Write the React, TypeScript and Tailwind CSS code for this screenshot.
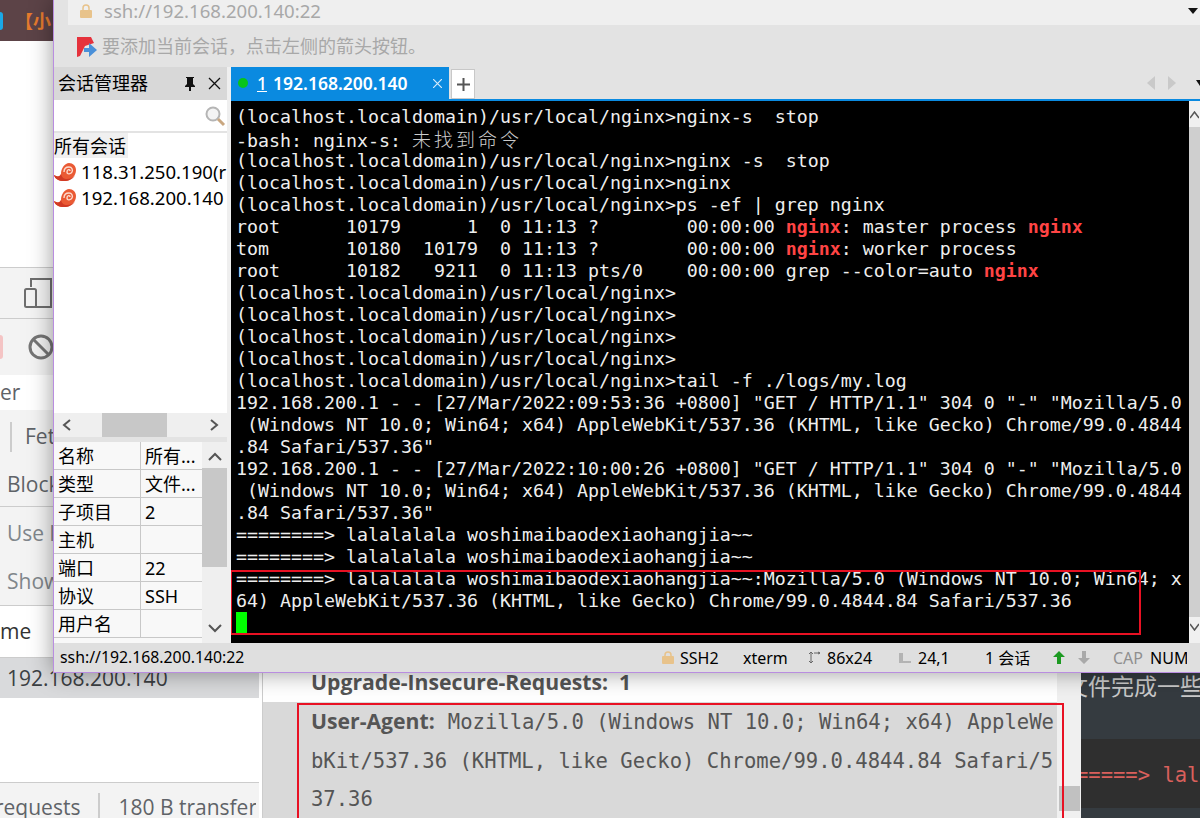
const PROMPT = "(localhost.localdomain)/usr/local/nginx>"

function Nginx() {
    return <span className="font-bold text-[#ff4444]">nginx</span>
}

function Snail() {
    return (
        <svg width="22" height="19" viewBox="0 0 22 19" className="shrink-0">
            <path d="M0 12c3 2 6 2 7-1C7 5 11 0 15 0c4 0 7 3 7 7 0 6-5 11-12 11-5 0-9-2-10-6Z" fill="#ea5a34" />
            <path d="M0 12c3 2 6 2 7-1 1 4 3 5 6 5 3 0 6-1 8-4-2 4-6 6-11 6-5 0-9-2-10-6Z" fill="#d13a24" />
            <path d="M10 9c0-3 2-5 5-5s4 3 3 5-5 3-5 0 3-3 3-1" stroke="#fcdccf" strokeWidth="1.400" fill="none" />
        </svg>
    )
}

function Terminal() {
    const lines: React.ReactNode[] = [
        PROMPT + "nginx-s  stop",
        <>-bash: nginx-s: <span className="font-['Noto_Sans_CJK_SC',monospace] font-light text-[19px] tracking-[3px] text-[#cccccc]">未找到命令</span></>,
        PROMPT + "nginx -s  stop",
        PROMPT + "nginx",
        PROMPT + "ps -ef | grep nginx",
        <>root      10179      1  0 11:13 ?        00:00:00 <Nginx />: master process <Nginx /></>,
        <>tom       10180  10179  0 11:13 ?        00:00:00 <Nginx />: worker process</>,
        <>root      10182   9211  0 11:13 pts/0    00:00:00 grep --color=auto <Nginx /></>,
        PROMPT,
        PROMPT,
        PROMPT,
        PROMPT,
        PROMPT + "tail -f ./logs/my.log",
        '192.168.200.1 - - [27/Mar/2022:09:53:36 +0800] "GET / HTTP/1.1" 304 0 "-" "Mozilla/5.0',
        " (Windows NT 10.0; Win64; x64) AppleWebKit/537.36 (KHTML, like Gecko) Chrome/99.0.4844",
        '.84 Safari/537.36"',
        '192.168.200.1 - - [27/Mar/2022:10:00:26 +0800] "GET / HTTP/1.1" 304 0 "-" "Mozilla/5.0',
        " (Windows NT 10.0; Win64; x64) AppleWebKit/537.36 (KHTML, like Gecko) Chrome/99.0.4844",
        '.84 Safari/537.36"',
        "========> lalalalala woshimaibaodexiaohangjia~~",
        "========> lalalalala woshimaibaodexiaohangjia~~",
        "========> lalalalala woshimaibaodexiaohangjia~~:Mozilla/5.0 (Windows NT 10.0; Win64; x",
        "64) AppleWebKit/537.36 (KHTML, like Gecko) Chrome/99.0.4844.84 Safari/537.36",
    ]
    return (
        <div className="relative w-[958px] bg-black pl-[5px] pt-[5px] font-['DejaVu_Sans_Mono',monospace] text-[18.27px] leading-[22px] text-[#eeeeee] whitespace-pre overflow-hidden">
            {lines.map((line, i) => <div key={i} className="h-[22px]">{line}</div>)}
            <div className="h-[22px] w-[11px] bg-[#00ff00]"></div>
            {/* red annotation drawn over the terminal */}
            <div className="absolute left-[-1px] top-[469px] w-[911px] h-[65px] border-2 border-[#e81123]"></div>
        </div>
    )
}

function Sidebar() {
    const props = [["名称", "所有..."], ["类型", "文件..."], ["子项目", "2"], ["主机", ""], ["端口", "22"], ["协议", "SSH"], ["用户名", ""]]
    return (
        <div className="w-[173px] flex flex-col text-black font-['Noto_Sans','Noto_Sans_CJK_SC',sans-serif]">
            <div className="h-[33px] bg-[#d8d8d8] flex items-center pl-[4px] pr-[6px] text-[18px]">
                <span className="flex-1">会话管理器</span>
                <svg width="14" height="16" viewBox="0 0 14 16" className="mr-[11px]"><path d="M3 1h8v1h-1v6l2 2v1H8v4H6v-4H2v-1l2-2V2H3Z" fill="#111" /></svg>
                <svg width="13" height="13" viewBox="0 0 13 13"><path d="M1 1l11 11M12 1 1 12" stroke="#111" strokeWidth="1.300" /></svg>
            </div>
            <div className="h-[31px] bg-white flex items-center justify-end pr-[1px] mb-[2px]">
                <svg width="22" height="22" viewBox="0 0 22 22">
                    <circle cx="9" cy="9" r="6.500" fill="#f4f4f4" stroke="#b5b5b5" strokeWidth="2" />
                    <path d="M14 14l6 6" stroke="#c9a780" strokeWidth="3" />
                </svg>
            </div>
            <div className="h-[280px] bg-white text-[18.600px] leading-[26px] overflow-hidden">
                <div className="w-[74px] h-[25px] bg-[#f0f0f0] text-[18px] whitespace-nowrap">所有会话</div>
                <div className="flex items-center h-[26px] mt-[1px] whitespace-nowrap overflow-hidden gap-[5px]"><Snail />118.31.250.190(r</div>
                <div className="flex items-center h-[26px] whitespace-nowrap overflow-hidden gap-[5px]"><Snail />192.168.200.140</div>
            </div>
            <div className="h-[24px] bg-[#efefef] flex items-center px-[8px] mb-[5px]">
                <svg width="10" height="12" viewBox="0 0 10 12"><path d="M8 1 2 6l6 5" stroke="#555" strokeWidth="2" fill="none" /></svg>
                <div className="ml-[30px] w-[65px] h-full bg-[#c8c8c8] mr-auto"></div>
                <svg width="10" height="12" viewBox="0 0 10 12"><path d="M2 1l6 5-6 5" stroke="#555" strokeWidth="2" fill="none" /></svg>
            </div>
            <div className="flex-1 flex bg-[#f8f8f8] overflow-hidden">
                <div className="w-[148px] text-[18px] leading-[29px]">
                    {props.map(([name, value]) => (
                        <div key={name} className="h-[28px] flex border-b border-[#c8c8c8]">
                            <div className="w-[87px] pl-[4px] border-r border-[#c8c8c8]">{name}</div>
                            <div className="pl-[4px]">{value}</div>
                        </div>
                    ))}
                </div>
                <div className="w-[25px] bg-[#efefef] flex flex-col items-center">
                    <svg width="14" height="10" viewBox="0 0 14 10" className="mt-[10px] mb-[6px]"><path d="M1 8l6-6 6 6" stroke="#555" strokeWidth="2" fill="none" /></svg>
                    <div className="w-full h-[99px] bg-[#c8c8c8] mb-[56px]"></div>
                    <svg width="14" height="10" viewBox="0 0 14 10"><path d="M1 2l6 6 6-6" stroke="#555" strokeWidth="2" fill="none" /></svg>
                </div>
            </div>
        </div>
    )
}

function StatusBar() {
    return (
        <div className="h-[29px] bg-[#dfdfdf] flex items-center pl-[6px] text-[16px] text-black font-['Noto_Sans','Noto_Sans_CJK_SC',sans-serif] whitespace-nowrap overflow-hidden">
            <span className="w-[602px] text-[15.800px]">ssh://192.168.200.140:22</span>
            <svg width="12" height="13" viewBox="0 0 12 13" className="mr-[6px]"><path d="M3 6V4a3 3 0 0 1 6 0v2" stroke="#e8c38b" strokeWidth="1.500" fill="none" /><rect y="5" width="12" height="8" rx="1" fill="#e8c38b" /></svg>
            <span className="w-[63px]">SSH2</span>
            <span className="w-[65px]">xterm</span>
            <svg width="12" height="13" viewBox="0 0 12 13" className="mr-[7px]"><path d="M3 1v11M1 3l2-2 2 2M1 10l2 2 2-2M6 2h6M10 1l2 1-2 1" stroke="#666" fill="none" /></svg>
            <span className="w-[72px]">86x24</span>
            <svg width="12" height="10" viewBox="0 0 12 10" className="mr-[7px]"><path d="M1 0v10M3 0v10M5 8v2M7 8v2M9 8v2M11 8v2" stroke="#888" /></svg>
            <span className="w-[67px]">24,1</span>
            <span className="w-[68px]">1 会话</span>
            <svg width="12" height="13" viewBox="0 0 12 13" className="mr-[13px]"><path d="M6 0l6 6H8v7H4V6H0Z" fill="#1d9a22" /></svg>
            <svg width="12" height="13" viewBox="0 0 12 13" className="mr-[23px]"><path d="M6 13 0 7h4V0h4v7h4Z" fill="#a9a9a9" /></svg>
            <span className="text-[#8f8f8f] mr-[7px]">CAP</span>
            <span className="w-[37px] overflow-hidden">NUM</span>
        </div>
    )
}

function SshWindow() {
    return (
        <div className="absolute left-[53px] top-0 w-[1147px] h-[673px] border-l border-b border-[#b98de0] bg-[#e3e3e3] flex flex-col shadow-[0_0_22px_rgba(0,0,0,0.4)] font-['Noto_Sans','Noto_Sans_CJK_SC',sans-serif]">
            <div className="h-[25px] flex pl-[14px]">
                <div className="flex-1 bg-[#efefef] flex items-center pl-[12px] pb-[3px] text-[18.600px] text-[#a8a8a8] whitespace-nowrap">
                    <svg width="12" height="14" viewBox="0 0 12 14" className="mr-[12px]"><path d="M3 7V4a3 3 0 0 1 6 0v3" stroke="#e8c38b" strokeWidth="1.500" fill="none" /><rect y="6" width="12" height="8" rx="1" fill="#e8c38b" /></svg>
                    <span className="flex-1">ssh://192.168.200.140:22</span>
                    <svg width="10" height="6" viewBox="0 0 10 6" className="mr-[2px]"><path d="M0 0h10L5 6Z" fill="#111" /></svg>
                </div>
            </div>
            <div className="h-[42px] flex items-center pl-[22px] pt-[1px] text-[18px] text-[#a8a8a8] whitespace-nowrap">
                <svg width="21" height="20" viewBox="0 0 21 20" className="mr-[5px] shrink-0">
                    <path d="M1 0h14l3 6-9 3-5 10-3 1Z" fill="#e5323c" />
                    <path d="M8 11h5V6l8 7-8 7v-5H8Z" fill="#4a90d9" />
                </svg>
                要添加当前会话，点击左侧的箭头按钮。
            </div>
            <div className="flex-1 flex min-h-0">
                <Sidebar />
                <div className="w-[4px] bg-[#efefef]"></div>
                <div className="flex-1 flex flex-col min-w-0">
                    <div className="h-[34px] flex border-b-2 border-[#0a8ae0] bg-[#e3e3e3]">
                        <div className="w-[218px] bg-[#0a8ae0] flex items-center pl-[7px] text-white text-[17.500px] font-semibold whitespace-nowrap">
                            <span className="w-[10px] h-[10px] rounded-full bg-[#08c41a] mr-[9px]"></span>
                            <span className="underline mr-[6px] font-medium">1</span>
                            <span className="w-[160px]">192.168.200.140</span>
                            <svg width="9" height="9" viewBox="0 0 9 9"><path d="M0 0l9 9M9 0 0 9" stroke="#d5ebfb" strokeWidth="1.200" /></svg>
                        </div>
                        <div className="ml-[2px] mt-[2px] w-[24px] h-[30px] bg-white border border-[#c8c8c8] flex items-center justify-center">
                            <svg width="13" height="13" viewBox="0 0 13 13"><path d="M6.500 0v13M0 6.500h13" stroke="#555" strokeWidth="2" /></svg>
                        </div>
                        <div className="flex-1 flex items-center justify-end">
                            <svg width="8" height="14" viewBox="0 0 8 14" className="mr-[13px]"><path d="M8 0v14L0 7Z" fill="#c9c9c9" /></svg>
                            <svg width="8" height="14" viewBox="0 0 8 14" className="mr-[20px]"><path d="M0 0v14l8-7Z" fill="#c9c9c9" /></svg>
                            <svg width="4" height="6" viewBox="0 0 4 6"><path d="M0 0h4v6Z" fill="#111" /></svg>
                        </div>
                    </div>
                    <div className="flex-1 flex min-h-0">
                        <Terminal />
                        <div className="flex-1 bg-[#f0f0f0] flex flex-col items-center">
                            <svg width="9" height="8" viewBox="0 0 9 8" className="mt-[10px] mb-[8px]"><path d="M0 7l4.500-6L9 7" stroke="#555" strokeWidth="1.500" fill="none" /></svg>
                            <div className="w-full h-[490px] bg-[#cfcfcf] mb-[6px]"></div>
                            <svg width="9" height="8" viewBox="0 0 9 8"><path d="M0 1l4.500 6L9 1" stroke="#555" strokeWidth="1.500" fill="none" /></svg>
                        </div>
                    </div>
                </div>
            </div>
            <StatusBar />
        </div>
    )
}

function LeftPanel() {
    return (
        <div className="w-[259px] h-[818px] flex flex-col text-[21px] text-[#5f6368] font-['Open_Sans',sans-serif] whitespace-nowrap overflow-hidden">
            <div className="shrink-0 h-[41px] bg-[#5c4347] flex items-center text-[18px] text-[#e67b2e] font-['Noto_Sans_CJK_SC',sans-serif] font-bold">
                <span className="w-[3px] h-[18px] bg-[#1aa9e8] rounded-r mr-[12px]"></span>
                【小
            </div>
            <div className="shrink-0 h-[226px] bg-white"></div>
            <div className="shrink-0 h-[52px] bg-[#f3f3f3] border-y border-[#cccccc] flex items-center pl-[24px]">
                <svg width="28" height="30" viewBox="0 0 28 30" fill="none" stroke="#6e6e6e" strokeWidth="2">
                    <path d="M7 9V1h20v28H11" />
                    <rect x="1" y="11" width="11" height="18" rx="1.500" />
                </svg>
            </div>
            <div className="shrink-0 h-[56px] bg-[#f3f3f3] flex items-center">
                <span className="w-[3px] h-[24px] rounded-r-full bg-[#f4c4c4] mr-[25px]"></span>
                <svg width="26" height="26" viewBox="0 0 26 26" fill="none" stroke="#757575" strokeWidth="3">
                    <circle cx="13" cy="13" r="11" /><path d="M5 5l16 16" />
                </svg>
            </div>
            <div className="shrink-0 h-[35px] bg-white flex items-center">
                <span>er</span>
            </div>
            <div className="shrink-0 h-[97px] bg-[#f3f3f3] border-b border-[#cccccc] flex flex-col">
                <div className="h-[53px] flex items-center">
                    <span className="w-[2px] h-[30px] bg-[#cccccc] ml-[10px] mr-[13px]"></span>
                    <span>Fet</span>
                </div>
                <div className="pl-[7px] pt-[8px] leading-[26px]">Block</div>
            </div>
            <div className="shrink-0 h-[99px] bg-[#f3f3f3] border-b border-[#cccccc] pl-[7px] text-[#80868b]">
                <div className="pt-[12px] leading-[28px]">Use l</div>
                <div className="pt-[20px] leading-[28px]">Show</div>
            </div>
            <div className="shrink-0 h-[52px] bg-white border-b border-[#cccccc] flex items-center">
                <span className="text-[#333]">me</span>
            </div>
            <div className="shrink-0 h-[40px] bg-[#d9dadc] pl-[7px] pt-[1px] leading-[38px] text-[#3c4043]">192.168.200.140</div>
            <div className="shrink-0 h-[84px] bg-white"></div>
            <div className="flex-1 min-h-0 bg-[#f3f3f3] border-t border-[#cccccc] flex items-start overflow-hidden">
                <span className="-ml-[5px] mt-[10px] leading-[28px]">requests</span>
                <span className="w-[2px] h-[30px] bg-[#cccccc] mt-[10px] ml-[18px] mr-[18px]"></span>
                <span className="w-[138px] mt-[10px] leading-[28px] overflow-hidden">180 B transfer</span>
            </div>
        </div>
    )
}

function HeadersPanel() {
    return (
        <div className="flex-1 min-w-0 flex flex-col text-[#555555] font-['Open_Sans',sans-serif] text-[21.200px] border-l border-[#cccccc]">
            <div className="h-[702px] bg-white flex items-end pl-[48px] pb-[1px]">
                <span className="font-bold leading-[38px] whitespace-nowrap">Upgrade-Insecure-Requests:<span className="ml-[11px]">1</span></span>
            </div>
            <div className="relative flex-1 bg-[#d9d9d9] pl-[48px] leading-[38px] whitespace-nowrap font-['DejaVu_Sans_Mono',monospace] text-[20.550px]">
                <div className="h-[40px]"><span className="font-bold font-['Open_Sans',sans-serif] text-[21.200px] mr-[13px]">User-Agent:</span>Mozilla/5.0 (Windows NT 10.0; Win64; x64) AppleWe</div>
                <div className="h-[38px]">bKit/537.36 (KHTML, like Gecko) Chrome/99.0.4844.84 Safari/5</div>
                <div className="h-[38px]">37.36</div>
                {/* red annotation */}
                <div className="absolute left-[34px] top-[1px] w-[767px] h-[130px] border-2 border-[#e81123]"></div>
            </div>
        </div>
    )
}

export default function App() {
    return (
        <div className="relative w-[1200px] h-[818px] overflow-hidden flex bg-white">
            <LeftPanel />
            <div className="w-[3px] bg-white"></div>
            <HeadersPanel />
            <div className="w-[24px] bg-[#f0f0f0] flex flex-col items-end pr-[1px]">
                <div className="h-[786px]"></div>
                <div className="w-[21px] h-[25px] bg-[#c1c1c1]"></div>
            </div>
            <div className="w-[119px] bg-[#353b40] flex flex-col overflow-hidden whitespace-nowrap">
                <div className="h-[673px]"></div>
                <div className="h-[66px] text-[23px] leading-[24px] text-[#c9c9c9] -ml-[16px] font-['Noto_Sans_CJK_SC',sans-serif]">文件完成一些</div>
                <div className="h-[69px] bg-[#2f2f2f] pt-[20px] leading-[32px] font-['DejaVu_Sans_Mono',monospace] text-[20.500px] text-[#d9605c]">
                    <div className="-ml-[5px]">=====&gt; lal</div>
                </div>
            </div>
            <SshWindow />
        </div>
    )
}
